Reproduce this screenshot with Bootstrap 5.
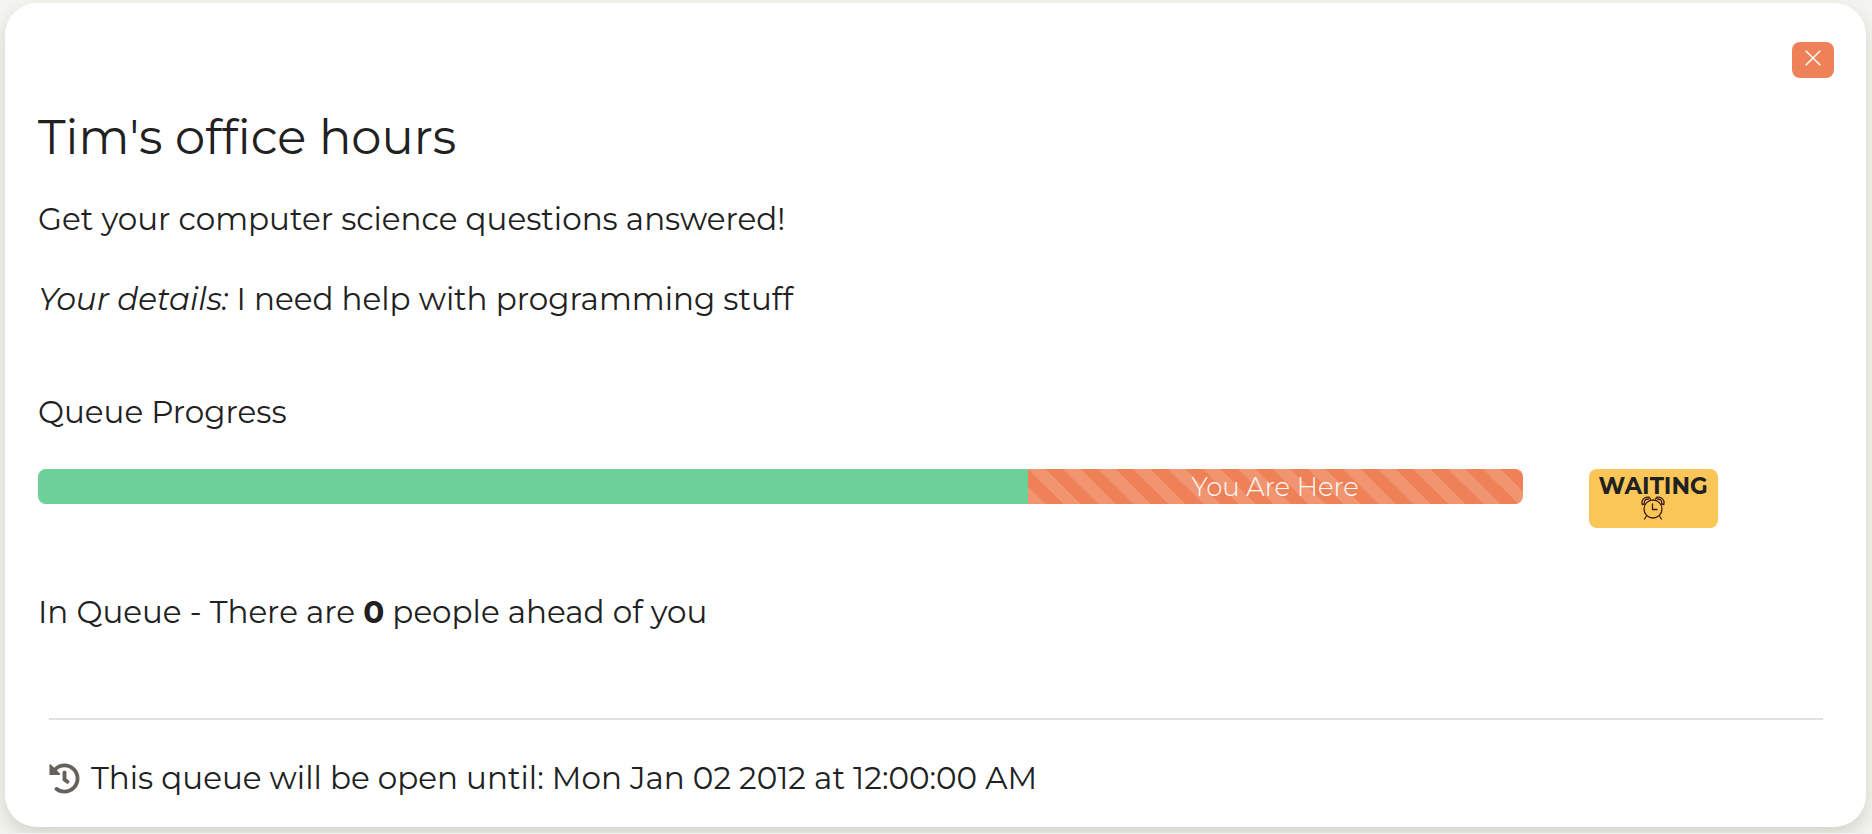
<!DOCTYPE html>
<html lang="en">
<head>
<meta charset="utf-8">
<meta name="viewport" content="width=device-width, initial-scale=1">
<title>Tim's office hours</title>
<link href="https://cdn.jsdelivr.net/npm/bootstrap@5.3.0/dist/css/bootstrap.min.css" rel="stylesheet">
<style>
body { background: #f3f3ef; color: #212121; font-family: Montserrat, Inter, "Open Sans", sans-serif; font-size: 31px; font-weight: 400; font-variant-ligatures: none; line-height: 48px; }
.queue-card { margin: 3px 6px 6px 5px; padding: 39px 32px 25px 33px; border: 0; border-radius: 32px; color: inherit; box-shadow: 0 8px 16px rgba(60, 60, 40, .16); }
.btn-leave { width: 42px; height: 36px; border-radius: 8px; background: #ee8157; padding: 0 0 5px; }
.btn-leave:hover { background: #e06f44; }
.queue-title { font-size: 48px; font-weight: 400; line-height: 56px; margin: 31px 0 30px; }
.queue-text { margin-bottom: 32px; }
.queue-label { margin: 33px 0 33px; }
.bar-col { padding-right: 12px; }
.status-col { padding-left: 54px; }
.progress { height: 35px; border-radius: 8px; font-size: 26px; font-weight: 300; background: #e9ecef; }
.bar-ahead { background-color: #6cd098; }
.bar-you { background-color: #ee8157; background-size: 35px 35px; }
.status-badge { display: inline-block; width: 129px; height: 59px; padding: 8px 0 0; border-radius: 8px; background: #fbc658; color: #212121; font-size: 23px; font-weight: 700; line-height: 19px; }
.queue-place { margin: 60px 0 82px; }
.queue-place strong { font-weight: 700; }
.queue-card > .queue-rule { margin: 0 11px 34px; border-top: 2px solid #e1e1e1; opacity: 1; }
.queue-until { margin: 0 11px; gap: 11px; }
</style>
</head>
<body>
<main class="card queue-card">
  <div class="d-flex justify-content-end">
    <button type="button" class="btn btn-leave d-flex align-items-center justify-content-center" aria-label="Leave queue">
      <svg width="16" height="16" viewBox="0 0 16 16" fill="none" stroke="#fff" stroke-width="1.5" aria-hidden="true"><path d="M.7.7l14.6 14.6M15.3.7L.7 15.3"/></svg>
    </button>
  </div>
  <h1 class="queue-title">Tim's office hours</h1>
  <p class="queue-text">Get your computer science questions answered!</p>
  <p class="queue-text"><em>Your details:</em> I need help with programming stuff</p>
  <p class="queue-label">Queue Progress</p>
  <div class="row g-0">
    <div class="col-10 bar-col">
      <div class="progress">
        <div class="progress-bar bar-ahead" role="progressbar" style="width: 66.66%" aria-label="Queue"></div>
        <div class="progress-bar progress-bar-striped bar-you" role="progressbar" style="width: 33.34%">You Are Here</div>
      </div>
    </div>
    <div class="col-2 status-col d-flex">
      <span class="status-badge text-center">WAITING
        <svg class="d-block mx-auto" width="24" height="24" viewBox="0 0 24 24" fill="none" stroke="#3d1c14" stroke-width="1.3" stroke-linecap="round" aria-hidden="true"><circle cx="12" cy="13" r="9"/><path d="M11.5 8v5.500h4.500M5.500 20l-2 3M18.500 20l2 3M1.300 8.500C-.2 4 3.500.300 8 1.200L9.500 3M3.300 7C3 4.500 5 3 7.500 3M22.700 8.500C24.200 4 20.500.300 16 1.200L14.500 3M20.700 7C21 4.500 19 3 16.500 3M1.300 8.500L3.500 8M22.700 8.500L20.500 8"/></svg>
      </span>
    </div>
  </div>
  <p class="queue-place">In Queue - There are <strong>0</strong> people ahead of you</p>
  <hr class="queue-rule">
  <div class="queue-until d-flex align-items-center">
    <svg class="flex-shrink-0" width="31" height="31" viewBox="0 0 512 512" fill="#66615b" aria-hidden="true"><path d="M504 255.531c.253 136.640-111.180 248.372-247.820 248.468-59.015.042-113.223-20.530-155.822-54.911-11.077-8.940-11.905-25.541-1.839-35.607l11.267-11.267c8.609-8.609 22.353-9.551 31.891-1.984C173.062 425.135 212.781 440 256 440c101.705 0 184-82.311 184-184 0-101.705-82.311-184-184-184-48.814 0-93.149 18.969-126.068 49.932l50.754 50.754c10.080 10.080 2.941 27.314-11.313 27.314H24c-8.837 0-16-7.163-16-16V38.627c0-14.254 17.234-21.393 27.314-11.314l49.372 49.372C129.209 34.136 189.552 8 256 8c136.810 0 247.747 110.780 248 247.531zm-180.912 78.784l9.823-12.630c8.138-10.463 6.253-25.542-4.210-33.679L288 256.349V152c0-13.255-10.745-24-24-24h-16c-13.255 0-24 10.745-24 24v135.651l65.409 50.874c10.463 8.137 25.541 6.253 33.679-4.210z"/></svg>
    <span>This queue will be open until: Mon Jan 02 2012 at 12:00:00 AM</span>
  </div>
</main>
<script src="https://cdn.jsdelivr.net/npm/bootstrap@5.3.0/dist/js/bootstrap.bundle.min.js"></script>
</body>
</html>
